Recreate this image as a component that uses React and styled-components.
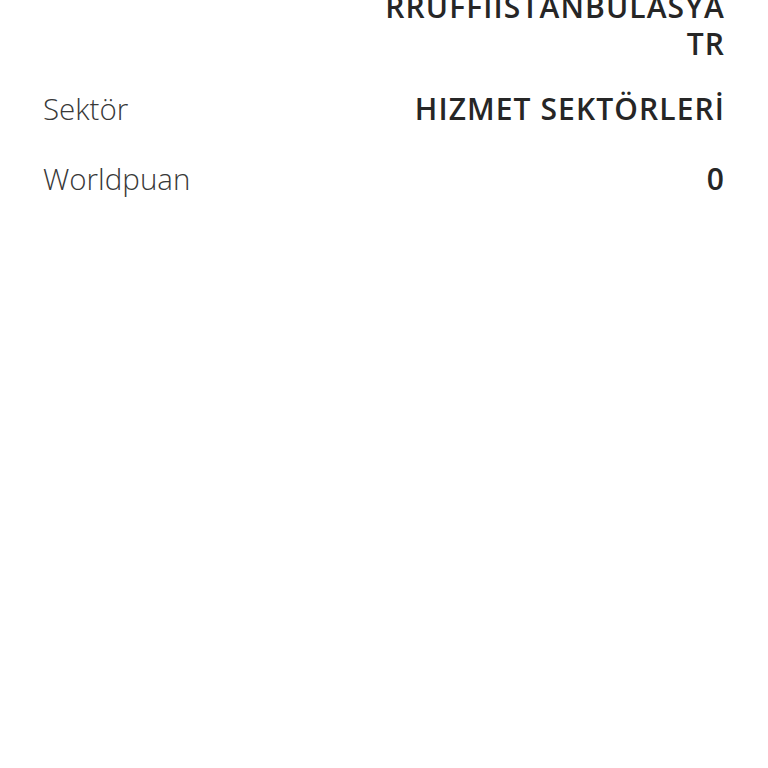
import React from 'react'
import styled, { createGlobalStyle } from 'styled-components'

const GlobalStyle = createGlobalStyle`
  html, body {
    margin: 0;
    padding: 0;
    background: #ffffff;
  }
  body {
    font-family: 'Open Sans', 'Noto Sans', sans-serif;
    color: #222222;
  }
`

const List = styled.dl`
  margin: -49px 0 0;
  padding: 0 44px 0 43px;
  display: flex;
  flex-direction: column;
`

const Row = styled.div`
  display: flex;
  justify-content: space-between;
  align-items: flex-start;
  gap: 24px;
  padding-bottom: ${({ $space }) => $space}px;
`

const Label = styled.dt`
  margin: 0;
  font-size: 29.5px;
  line-height: 37px;
  font-weight: 300;
  color: #383838;
  white-space: nowrap;
`

const Value = styled.dd`
  margin: 0 -1px 0 0;
  font-size: 30px;
  line-height: 37px;
  font-weight: 600;
  letter-spacing: 1.1px;
  color: #262626;
  text-align: right;
`

const rows = [
  { label: 'Unvan', lines: ['', 'RRUFFIISTANBULASYA', 'TR'], space: 28 },
  { label: 'Sektör', lines: ['HIZMET SEKTÖRLERİ'], space: 33 },
  { label: 'Worldpuan', lines: ['0'], space: 33 },
]

export default function App() {
  return (
    <>
      <GlobalStyle />
      <List>
        {rows.map((row) => (
          <Row key={row.label} $space={row.space}>
            <Label>{row.label}</Label>
            <Value>
              {row.lines.map((line, i) => (
                <div key={i}>{line || '\u00a0'}</div>
              ))}
            </Value>
          </Row>
        ))}
      </List>
    </>
  )
}
